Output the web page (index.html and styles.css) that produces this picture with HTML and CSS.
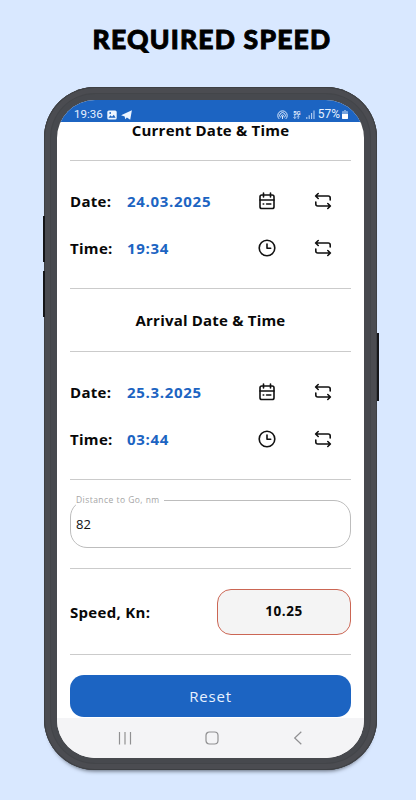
FILE: index.html
```html
<!DOCTYPE html>
<html lang="en">
<head>
  <meta charset="UTF-8" />
  <meta name="viewport" content="width=device-width, initial-scale=1.0"/>
  <title>Required Speed</title>
  <link rel="stylesheet" href="styles.css">
</head>
<body>
  <svg class="icon-defs" aria-hidden="true">
    <symbol id="calendar" viewBox="0 0 18 18">
      <rect x="2" y="3" width="14" height="13.5" rx="1.8"/>
      <path d="M2 8h14M5.5 1v4M12.5 1v4M5.2 12h.5M8.6 12h4.2"/>
    </symbol>
    <symbol id="clock" viewBox="0 0 18 18">
      <circle cx="9" cy="9" r="7.8"/>
      <path d="M9 5v4.2h3.7"/>
    </symbol>
    <symbol id="swap" viewBox="0 0 18 18">
      <path d="M4.2 1.5L1.6 4l2.6 2.5M1.8 4h12.4q2 0 2 2v2M13.8 11.5l2.6 2.5-2.6 2.5M16.2 14H3.8q-2 0-2-2v-2"/>
    </symbol>
  </svg>

  <h1 class="page-title">REQUIRED SPEED</h1>

  <div class="phone">
    <span class="side-button volume-up"></span>
    <span class="side-button volume-down"></span>
    <span class="side-button power"></span>

    <div class="screen">
      <header class="status-bar">
        <div class="status-left">
          <span>19:36</span>
          <svg width="10" height="10" viewBox="0 0 10 10"><rect x=".3" y=".5" width="9.4" height="9" rx="1.6" fill="#eef5ff"/><path d="M1.5 7.8l2-2.5 1.5 1.5 1.8-2 1.8 3z" fill="#1c64c2"/><circle cx="3.2" cy="3" r=".9" fill="#1c64c2"/></svg>
          <svg width="11" height="10" viewBox="0 0 11 10"><path d="M.1 5.2L10.9.3 9.2 9.7 5.9 7.6 4.2 9.3 3.7 6.5z" fill="#eef5ff"/></svg>
        </div>
        <div class="status-right">
          <svg class="hotspot" width="11" height="10" viewBox="0 0 11 10"><path d="M2.2 8.9a4.7 4.7 0 1 1 6.6 0M3.6 7.5a2.8 2.8 0 1 1 3.8 0"/><circle cx="5.5" cy="5.7" r=".9"/><path d="M5.5 6v3"/></svg>
          <div class="network">
            <span>5G</span>
            <svg width="7" height="4" viewBox="0 0 7 4"><path d="M1.8 0v3.5M.5 2.2l1.3 1.3 1.3-1.3M5.2 4V.5M3.9 1.8L5.2.5l1.3 1.3"/></svg>
          </div>
          <svg width="9" height="9" viewBox="0 0 9 9"><path d="M.8 7v2M3.2 5.2V9M5.6 3v6M8 .5V9" stroke="#b6d0f2" stroke-width="1.1"/></svg>
          <span class="percent">57%</span>
          <svg width="6" height="9" viewBox="0 0 6 9"><path d="M2 0h2v1h1.2q.8 0 .8.8v6.4q0 .8-.8.8H.8Q0 9 0 8.2V1.8Q0 1 .8 1H2z" fill="#77a5df"/><path d="M0 4h6v4.2q0 .8-.8.8H.8Q0 9 0 8.2z" fill="#fff"/></svg>
        </div>
      </header>

      <main class="content">
        <h2 class="heading heading-first">Current Date &amp; Time</h2>
        <section class="date-time">
          <div class="row">
            <span class="label">Date:</span>
            <span class="value">24.03.2025</span>
            <svg class="icon"><use href="#calendar"/></svg>
            <svg class="icon"><use href="#swap"/></svg>
          </div>
          <div class="row">
            <span class="label">Time:</span>
            <span class="value">19:34</span>
            <svg class="icon"><use href="#clock"/></svg>
            <svg class="icon"><use href="#swap"/></svg>
          </div>
        </section>

        <h2 class="heading">Arrival Date &amp; Time</h2>
        <section class="date-time">
          <div class="row">
            <span class="label">Date:</span>
            <span class="value">25.3.2025</span>
            <svg class="icon"><use href="#calendar"/></svg>
            <svg class="icon"><use href="#swap"/></svg>
          </div>
          <div class="row">
            <span class="label">Time:</span>
            <span class="value">03:44</span>
            <svg class="icon"><use href="#clock"/></svg>
            <svg class="icon"><use href="#swap"/></svg>
          </div>
        </section>

        <section class="distance">
          <fieldset class="field">
            <legend>Distance to Go, nm</legend>
            <input type="text" value="82" aria-label="Distance to Go, nm" />
          </fieldset>
        </section>

        <section class="speed">
          <span class="label">Speed, Kn:</span>
          <output class="result">10.25</output>
        </section>

        <button class="reset" type="button">Reset</button>
      </main>

      <nav class="nav-bar">
        <svg width="14" height="14" viewBox="0 0 14 14"><path d="M1.5 1v12.5M7 1v12.5M12.5 1v12.5"/></svg>
        <svg width="14" height="14" viewBox="0 0 14 14"><rect x="1" y="1" width="12" height="12" rx="3.5"/></svg>
        <svg width="14" height="14" viewBox="0 0 14 14"><path d="M10.3.8L3.7 7l6.6 6.3"/></svg>
      </nav>
    </div>
  </div>
</body>
</html>
```

FILE: styles.css
```css
:root {
  --blue: #1c64c2;
  --page: #d9e8ff;
  --frame: #47494e;
  --line: #cbcbcb;
}

* {
  margin: 0;
  padding: 0;
  box-sizing: border-box;
}

body {
  height: 800px;
  overflow: hidden;
  background: var(--page);
  font-family: "Open Sans", "Noto Sans", sans-serif;
  color: #080808;
}

.icon-defs {
  display: none;
}

.page-title {
  height: 87px;
  padding: 21px 0 0 8px;
  font-family: Lato, sans-serif;
  font-size: 26.5px;
  line-height: 36px;
  font-weight: 900;
  letter-spacing: 1.2px;
  text-align: center;
  white-space: nowrap;
  color: #000;
  -webkit-text-stroke: 0.9px #000;
}

.phone {
  position: relative;
  width: 333px;
  height: 683px;
  margin-left: 44px;
  padding: 13px 13px 12px;
  border-radius: 51px;
  background: var(--frame);
  box-shadow: inset 0 0 0 1px #3e4044, inset 0 0 0 6px #4b4c51,
    inset 0 0 0 7px #434549, 0 5px 4px -4px #5b6370;
}

.side-button {
  position: absolute;
  background: #151619;
}

.volume-up,
.volume-down {
  left: -1px;
  width: 2px;
  height: 46px;
}

.volume-up {
  top: 129px;
}

.volume-down {
  top: 184px;
}

.power {
  top: 246px;
  right: -2px;
  width: 2px;
  height: 68px;
}

.screen {
  display: flex;
  flex-direction: column;
  height: 658px;
  overflow: hidden;
  border-radius: 38px;
  background: #fff;
}

.status-bar {
  display: flex;
  justify-content: space-between;
  flex: none;
  height: 22px;
  padding: 7px 16px 0 17px;
  background: var(--blue);
  color: #e6f0ff;
  font-family: Roboto, sans-serif;
  font-size: 12px;
  line-height: 15px;
}

.status-left,
.status-right {
  display: flex;
  align-items: center;
}

.status-left {
  gap: 4px;
}

.status-left span {
  width: 29px;
  font-size: 11.5px;
}

.status-right {
  gap: 5px;
}

.status-right .percent {
  margin: 0 -3px 0 -2px;
  font-size: 12px;
}

.hotspot {
  fill: none;
  stroke: #dbe9fd;
}

.network {
  display: flex;
  flex-direction: column;
  align-items: center;
  font-size: 6px;
  line-height: 5px;
  font-weight: 700;
}

.network svg {
  fill: none;
  stroke: #dbe9fd;
  stroke-width: 0.8;
}

.content {
  flex: 1;
  min-height: 0;
  padding: 0 13px;
}

.heading {
  height: 63px;
  border-bottom: 1px solid var(--line);
  font-size: 15px;
  line-height: 63px;
  font-weight: 700;
  letter-spacing: 0.2px;
  text-align: center;
}

.heading-first {
  height: 39px;
  line-height: 16px;
}

.date-time {
  height: 128px;
  padding-top: 16px;
  border-bottom: 1px solid var(--line);
}

.row {
  display: grid;
  grid-template-columns: 57px 112px 56px 56px;
  align-items: center;
  height: 47px;
}

.label,
.value {
  font-size: 15px;
  font-weight: 700;
}

.label {
  letter-spacing: 0.3px;
}

.value {
  color: var(--blue);
  letter-spacing: 0.7px;
}

.icon {
  justify-self: center;
  width: 18px;
  height: 18px;
  fill: none;
  stroke: #111;
  stroke-width: 1.6;
  stroke-linecap: round;
  stroke-linejoin: round;
}

.distance {
  height: 89px;
  padding-top: 14px;
  border-bottom: 1px solid var(--line);
}

.field {
  height: 54px;
  padding: 0 5px;
  border: 1px solid #bdbdbd;
  border-radius: 17px;
}

.field legend {
  padding: 0 4px 0 0;
  font-family: "Open Sans", sans-serif;
  font-size: 8.5px;
  line-height: 12px;
  font-weight: 500;
  letter-spacing: 0.45px;
  color: #a5a5a5;
}

.field input {
  display: block;
  width: 100%;
  height: 36px;
  border: none;
  outline: none;
  background: none;
  font-family: "Open Sans", sans-serif;
  font-size: 13px;
  color: #111;
}

.speed {
  display: flex;
  align-items: center;
  justify-content: space-between;
  height: 86px;
  border-bottom: 1px solid var(--line);
}

.result {
  width: 134px;
  height: 46px;
  border: 1px solid #cb6654;
  border-radius: 14px;
  background: #f4f4f4;
  font-size: 13.5px;
  line-height: 43px;
  font-weight: 700;
  letter-spacing: 0.6px;
  text-align: center;
}

.reset {
  display: block;
  width: 100%;
  height: 42px;
  margin-top: 20px;
  border: none;
  border-radius: 14px;
  background: var(--blue);
  color: #e8f1ff;
  font-family: "Open Sans", sans-serif;
  font-size: 15px;
  letter-spacing: 0.8px;
}

.nav-bar {
  display: flex;
  flex: none;
  align-items: center;
  justify-content: space-between;
  height: 40px;
  padding: 0 59px 0 61px;
  background: #f4f4f6;
}

.nav-bar svg {
  fill: none;
  stroke: #909092;
  stroke-width: 1.2;
}
```
